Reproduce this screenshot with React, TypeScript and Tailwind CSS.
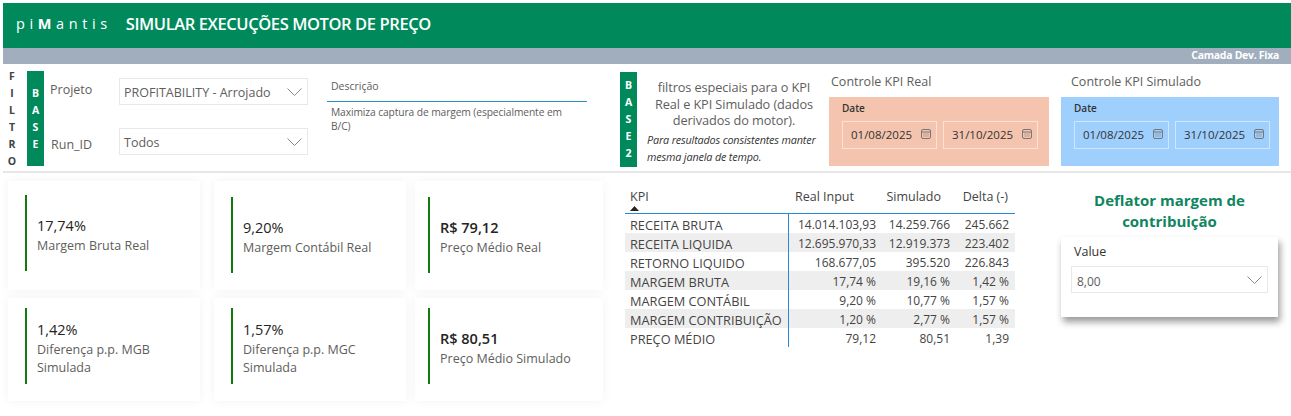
const font = 'font-["Open_Sans",sans-serif]'

function VerticalTag({ letters, className }: { letters: string[]; className: string }) {
  return (
    <div className={`flex flex-col items-center justify-center text-[10.5px] font-bold leading-[17px] ${className}`}>
      {letters.map((l, i) => (
        <span key={i}>{l}</span>
      ))}
    </div>
  )
}

function Chevron() {
  return (
    <svg width="15" height="8" viewBox="0 0 15 8" fill="none" stroke="#8a8a8a" strokeWidth="1" className="shrink-0">
      <path d="M0.5 0.5 7.5 7.5 14.5 0.5" />
    </svg>
  )
}

function Dropdown({ value, className }: { value: string; className?: string }) {
  return (
    <div className={`flex items-center justify-between border border-[#e8e8e8] bg-white pl-[4px] pr-[5px] text-[#605e5c] ${className ?? ''}`}>
      <span className="whitespace-nowrap pt-[4px]">{value}</span>
      <Chevron />
    </div>
  )
}

function CalendarIcon() {
  return (
    <svg width="10" height="10" viewBox="0 0 10 10" fill="none" stroke="#777" strokeWidth="1" className="-mt-[2px] shrink-0">
      <rect x="0.5" y="0.5" width="9" height="9" rx="1.5" />
      <path d="M0.5 3h9" />
      <path d="M2.5 5h1M4.5 5h1M6.5 5h1M2.5 7h1M4.5 7h1M6.5 7h1" strokeWidth="0.9" />
    </svg>
  )
}

function DateBox({ value }: { value: string }) {
  return (
    <div className="flex h-[28px] w-[95px] items-center gap-[9px] border border-white/50 pl-[8px] text-[11.5px] text-[#333]">
      <span>{value}</span>
      <CalendarIcon />
    </div>
  )
}

function DatePanel({ title, bg, pad, boxes }: { title: string; bg: string; pad: string; boxes: string[] }) {
  return (
    <div className="flex flex-col">
      <div className={`h-[33px] pt-[9px] text-[12.5px] leading-[18px] text-[#605e5c] ${pad}`}>{title}</div>
      <div className={`h-[69px] pl-[13px] pt-[4px] ${bg}`}>
        <div className="text-[10px] font-semibold leading-[14px] text-[#333]">Date</div>
        <div className="mt-[6px] flex gap-[6px]">
          {boxes.map((b) => (
            <DateBox key={b} value={b} />
          ))}
        </div>
      </div>
    </div>
  )
}

interface CardProps {
  value: string
  label: string[]
  bold?: boolean
  className: string
}

function Card({ value, label, bold, className }: CardProps) {
  return (
    <div className={`flex items-start bg-white shadow-[0_0_10px_rgba(0,0,0,0.05)] ${className}`}>
      <div className="flex h-[76px] flex-col justify-center border-l-2 border-[#107c10] pl-[10px] pt-[4px]">
        <div className={`text-[14.5px] leading-[20px] text-[#252423] ${bold ? 'font-semibold' : 'font-medium'}`}>{value}</div>
        <div className="mt-px whitespace-nowrap text-[12.5px] leading-[18px] text-[#605e5c]">
          {label.map((l) => (
            <div key={l}>{l}</div>
          ))}
        </div>
      </div>
    </div>
  )
}

const rows = [
  ['RECEITA BRUTA', '14.014.103,93', '14.259.766', '245.662'],
  ['RECEITA LIQUIDA', '12.695.970,33', '12.919.373', '223.402'],
  ['RETORNO LIQUIDO', '168.677,05', '395.520', '226.843'],
  ['MARGEM BRUTA', '17,74 %', '19,16 %', '1,42 %'],
  ['MARGEM CONTÁBIL', '9,20 %', '10,77 %', '1,57 %'],
  ['MARGEM CONTRIBUIÇÃO', '1,20 %', '2,77 %', '1,57 %'],
  ['PREÇO MÉDIO', '79,12', '80,51', '1,39'],
]

export default function App() {
  return (
    <div className={`h-[416px] w-[1291px] overflow-hidden bg-white pt-[3px] ${font}`}>
      {/* header */}
      <div className="ml-[3px] flex h-[45px] items-center bg-[#008a5c] pb-[3px] text-white">
        <div className="ml-[13px] text-[14.5px] tracking-[4.6px]">
          pi<span className="font-bold">M</span>antis
        </div>
        <div className="ml-[14px] text-[16.5px] font-semibold tracking-[-0.4px]">SIMULAR EXECUÇÕES MOTOR DE PREÇO</div>
      </div>
      <div className="ml-[3px] flex h-[16px] items-center justify-end bg-[#a0aebd] pr-[12px] text-[10.5px] font-bold tracking-[-0.3px] text-white">
        Camada Dev. Fixa
      </div>

      {/* filtros */}
      <div className="flex h-[107px]">
        <VerticalTag letters={['F', 'I', 'L', 'T', 'R', 'O']} className="ml-[8px] mt-[5px] h-[100px] w-[8px] text-[#444]" />
        <VerticalTag letters={['B', 'A', 'S', 'E']} className="ml-[11px] mt-[7px] h-[95px] w-[17px] bg-[#008a5c] text-white" />
        <div className="ml-[6px] flex w-[64px] flex-col text-[12.5px] text-[#605e5c]">
          <div className="mt-[17px] leading-[18px]">Projeto</div>
          <div className="ml-px mt-[37px] leading-[18px]">Run_ID</div>
        </div>
        <div className="ml-[5px] flex w-[189px] flex-col text-[12.5px]">
          <Dropdown value="PROFITABILITY - Arrojado" className="mt-[14px] h-[27px]" />
          <Dropdown value="Todos" className="mt-[23px] h-[27px]" />
        </div>
        <div className="ml-[19px] w-[260px]">
          <div className="mt-[14px] h-[24px] border-b border-[#2a8fc4] pl-[4px] text-[10.5px] leading-[16px] text-[#605e5c]">Descrição</div>
          <div className="mt-[3px] pl-[4px] pr-[18px] text-[10.25px] leading-[14px] tracking-[-0.1px] text-[#605e5c]">
            Maximiza captura de margem (especialmente em B/C)
          </div>
        </div>
        <VerticalTag letters={['B', 'A', 'S', 'E', '2']} className="ml-[33px] mt-[8px] h-[95px] w-[17px] bg-[#008a5c] text-white" />
        <div className="ml-[10px] mt-[15px] w-[182px] pr-[8px] text-center text-[12.75px] leading-[16.5px] tracking-[-0.1px] text-[#605e5c]">
          <div className="whitespace-nowrap">filtros especiais para o KPI</div>
          <div className="whitespace-nowrap">Real e KPI Simulado (dados</div>
          <div className="whitespace-nowrap">derivados do motor).</div>
          <div className="mt-[2px] whitespace-nowrap text-left text-[10.8px] italic leading-[17px] tracking-[-0.15px] text-[#333]">
            <div>Para resultados consistentes manter</div>
            <div>mesma janela de tempo.</div>
          </div>
        </div>
        <div className="w-[220px]">
          <DatePanel title="Controle KPI Real" bg="bg-[#f4c4ae]" pad="pl-[2px]" boxes={['01/08/2025', '31/10/2025']} />
        </div>
        <div className="ml-[12px] w-[218px]">
          <DatePanel title="Controle KPI Simulado" bg="bg-[#9fcffd]" pad="pl-[10px]" boxes={['01/08/2025', '31/10/2025']} />
        </div>
      </div>
      <div className="ml-[3px] h-[2px] bg-[#e6e6e6]" />

      {/* conteúdo */}
      <div className="flex">
        <div className="ml-[8px] mt-[8px] w-[595px]">
          <div className="flex">
            <Card value="17,74%" label={['Margem Bruta Real']} className="h-[109px] w-[192px] pl-[17px] pt-[14px]" />
            <Card value="9,20%" label={['Margem Contábil Real']} className="ml-[14px] h-[109px] w-[192px] pl-[17px] pt-[16px]" />
            <Card value="R$ 79,12" label={['Preço Médio Real']} bold className="ml-[9px] h-[109px] w-[188px] pl-[13px] pt-[16px]" />
          </div>
          <div className="mt-[8px] flex">
            <Card value="1,42%" label={['Diferença p.p. MGB', 'Simulada']} className="h-[103px] w-[192px] pl-[17px] pt-[10px]" />
            <Card value="1,57%" label={['Diferença p.p. MGC', 'Simulada']} className="ml-[14px] h-[103px] w-[192px] pl-[17px] pt-[10px]" />
            <Card value="R$ 80,51" label={['Preço Médio Simulado']} bold className="ml-[9px] h-[103px] w-[188px] pl-[13px] pt-[10px]" />
          </div>
        </div>

        <div className="ml-[22px] mt-[7px] w-[390px] text-[12.5px] text-[#444]">
          <div className="flex h-[34px] border-b border-[#2b88d8] pt-[8px] leading-[18px]">
            <div className="w-[164px] pl-[5px]">
              KPI
              <svg width="9" height="5" viewBox="0 0 9 5" className="block fill-[#252423]">
                <path d="M4.5 0 9 5H0z" />
              </svg>
            </div>
            <div className="w-[65px] whitespace-nowrap text-right">Real Input</div>
            <div className="w-[87px] whitespace-nowrap text-right">Simulado</div>
            <div className="w-[67px] whitespace-nowrap text-right">Delta (-)</div>
          </div>
          {rows.map((r, i) => (
            <div key={r[0]} className={`flex h-[19px] ${i % 2 === 1 ? 'bg-[#eeeeee]' : ''}`}>
              <div className="h-full w-[164px] whitespace-nowrap border-r border-[#2b88d8] pl-[5px] pt-[3px] text-[12.75px] leading-[16px]">{r[0]}</div>
              <div className="h-full w-[87px] whitespace-nowrap pt-[3px] text-right text-[12px] leading-[16px]">{r[1]}</div>
              <div className="h-full w-[74px] whitespace-nowrap pt-[3px] text-right text-[12px] leading-[16px]">{r[2]}</div>
              <div className="h-full w-[59px] whitespace-nowrap pt-[3px] text-right text-[12px] leading-[16px]">{r[3]}</div>
            </div>
          ))}
        </div>

        <div className="ml-[46px] mt-[17px] w-[217px]">
          <div className="text-center text-[15px] font-bold leading-[21px] text-[#0f8560]">
            Deflator margem de contribuição
          </div>
          <div className="mt-[5px] h-[80px] bg-white px-[10px] pt-[6px] shadow-[2px_5px_7px_rgba(0,0,0,0.4)]">
            <div className="ml-[3px] text-[12.5px] leading-[18px] text-[#333]">Value</div>
            <Dropdown value="8,00" className="mt-[5px] h-[27px] pl-[5px] text-[12px]" />
          </div>
        </div>
      </div>
    </div>
  )
}
